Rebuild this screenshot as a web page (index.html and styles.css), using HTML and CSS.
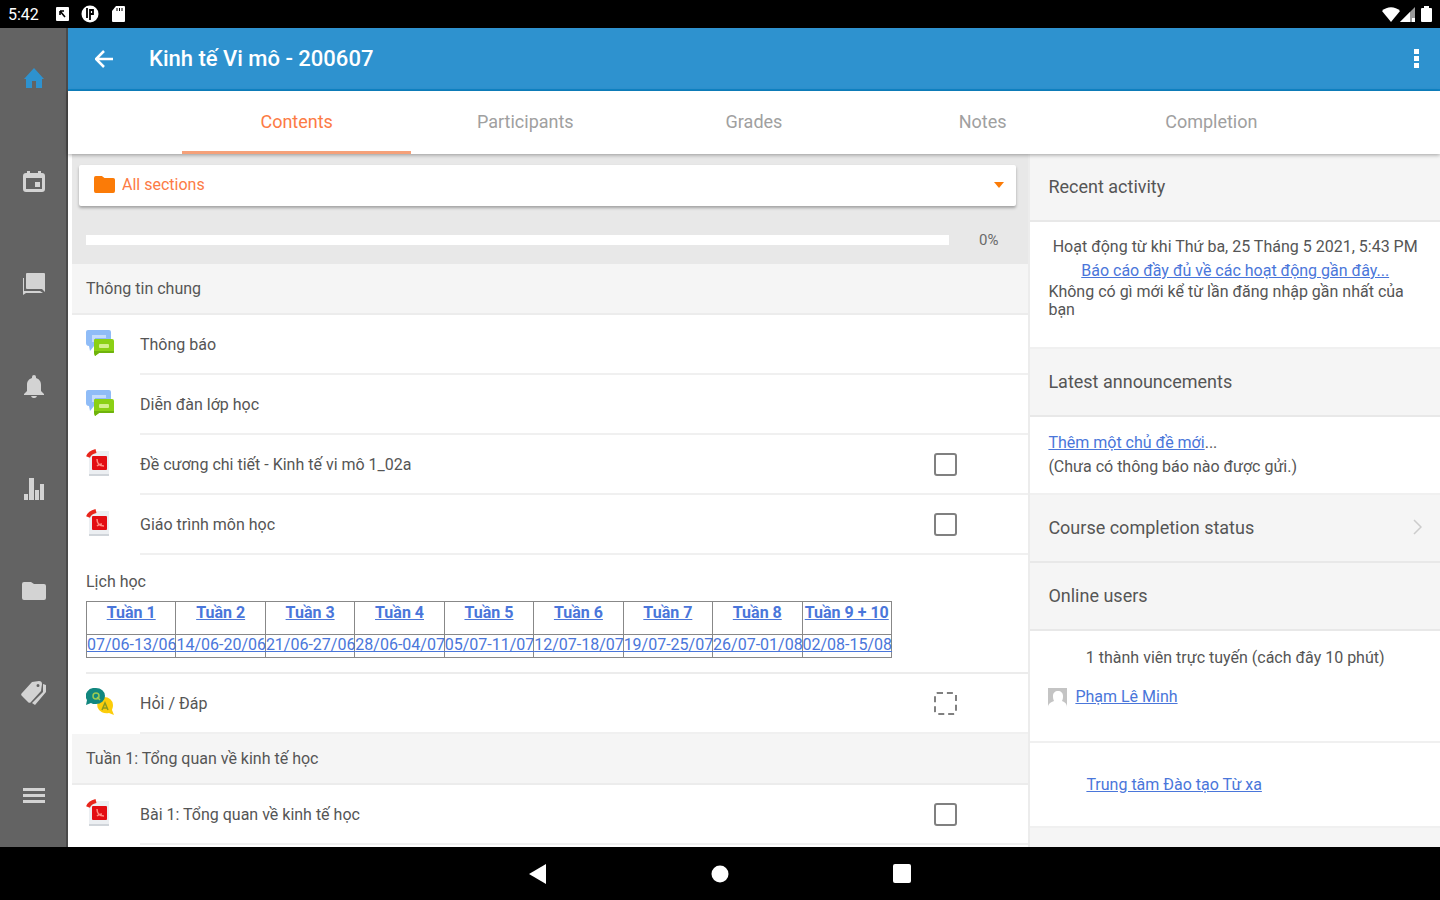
FILE: index.html
```html
<!DOCTYPE html>
<html lang="vi">
<head>
  <meta charset="UTF-8" />
  <meta name="viewport" content="width=device-width, initial-scale=1.0" />
  <title>Kinh tế Vi mô - 200607</title>
  <link rel="stylesheet" href="styles.css">
</head>
<body>
  <!-- shared icons -->
  <svg class="sprite" aria-hidden="true">
    <symbol id="forum" viewBox="0 0 28 28">
      <path fill="#8fbcf7" d="M2 1h21a2 2 0 0 1 2 2v14H8l-4 5-1-5a3 3 0 0 1-3-3V3a2 2 0 0 1 2-2z" />
      <path fill="#c5dcfc" d="M6 6h14v3H9v4H6z" />
      <path fill="#8bd015" d="M9 10h17a2 2 0 0 1 2 2v11a1 1 0 0 1-1 1H13l-4 3-1-3V11a1 1 0 0 1 1-1z" />
      <path fill="#6fb30c" d="M8 22h20v1a1 1 0 0 1-1 1H13l-4 3-1-3z" />
      <rect x="13" y="15" width="10" height="4" rx="1" fill="#d4f08f" />
    </symbol>
    <symbol id="pdf" viewBox="0 0 28 28">
      <path fill="#eceff2" d="M8 2h15v25H3V9z" />
      <path fill="#d0d5da" d="M3 25h20v2H3z" />
      <rect x="6" y="7" width="15" height="14" rx="1" fill="#e30d12" />
      <path fill="none" stroke="#e8261c" stroke-width="4" d="M2 8c1-3 4-5 8-6" />
      <path fill="none" stroke="#ff8a80" stroke-width="1.5" d="M11 10c0 4 2 7 7 7M11 17c2-2 3-2 5-2" />
    </symbol>
    <symbol id="folder" viewBox="0 0 24 18">
      <path fill="currentColor" d="M2 0h7l3 2h10a2 2 0 0 1 2 2v12a2 2 0 0 1-2 2H2a2 2 0 0 1-2-2V2a2 2 0 0 1 2-2z" />
    </symbol>
  </svg>

  <div class="status-bar">
    <div class="status-left">
      <span class="clock">5:42</span>
      <svg width="13" height="14" viewBox="0 0 13 14"><rect width="13" height="14" rx="1" fill="#fff" /><path d="M4 4l5 6M4 4v4M4 4h4" stroke="#000" stroke-width="1.6" fill="none" /></svg>
      <svg width="18" height="18" viewBox="0 0 18 18"><circle cx="9" cy="9" r="8.5" fill="#fff" /><path d="M6 3v10M9 4v11M9 5h3v4H9" stroke="#000" stroke-width="1.8" fill="none" /></svg>
      <svg width="14" height="16" viewBox="0 0 14 16"><path fill="#fff" d="M5 0h8a1 1 0 0 1 1 1v14a1 1 0 0 1-1 1H2a1 1 0 0 1-1-1V5z" /><path stroke="#000" d="M6 2v3M8.5 2v3M11 2v3" /></svg>
    </div>
    <div class="status-right">
      <svg width="18" height="15" viewBox="0 0 18 15"><path fill="#fff" d="M9 15L0 4c5-5 13-5 18 0z" /></svg>
      <svg width="15" height="15" viewBox="0 0 15 15"><path fill="#999" d="M15 0v15H0z" /><path fill="#fff" d="M10 5v10H0zM12 11h3v4h-3z" /></svg>
      <svg class="battery" width="11" height="16" viewBox="0 0 11 16"><path fill="#fff" d="M3 0h5v2h2a1 1 0 0 1 1 1v12a1 1 0 0 1-1 1H1a1 1 0 0 1-1-1V3a1 1 0 0 1 1-1h2z" /></svg>
    </div>
  </div>

  <div class="app">
    <nav class="side-nav">
      <a href="#" class="active" aria-label="Home"><svg width="24" height="24" viewBox="0 0 24 24"><path d="M10 21v-7h4v7h6v-9h2L12 1 2 12h2v9z" /></svg></a>
      <a href="#" aria-label="Calendar"><svg width="24" height="24" viewBox="0 0 24 24"><path fill-rule="evenodd" d="M5 1h3v2h8V1h3v2h1a3 3 0 0 1 3 3v13a3 3 0 0 1-3 3H4a3 3 0 0 1-3-3V6a3 3 0 0 1 3-3h1zM4 8v11h16V8z" /><path d="M13 12h5v5h-5z" /></svg></a>
      <a href="#" aria-label="Messages"><svg width="24" height="24" viewBox="0 0 24 24"><path d="M5 1h17a1 1 0 0 1 1 1v18l-3-3H5a1 1 0 0 1-1-1V2a1 1 0 0 1 1-1z" /><path d="M1 6h1v13h16l3 2H4l-3 2z" /></svg></a>
      <a href="#" aria-label="Notifications"><svg width="24" height="24" viewBox="0 0 24 24"><path d="M12 24a3 3 0 0 0 3-2H9a3 3 0 0 0 3 2zM19 17v-6c0-4-2-6-5-7V3a2 2 0 0 0-4 0v1c-3 1-5 3-5 7v6l-3 3v1h20v-1z" /></svg></a>
      <a href="#" aria-label="Grades"><svg width="24" height="24" viewBox="0 0 24 24"><path d="M2 17h4v6H2zM7 1h5v22H7zM13 13h4v10h-4zM18 7h4v16h-4z" /></svg></a>
      <a href="#" aria-label="Files"><svg width="24" height="18"><use href="#folder" /></svg></a>
      <a href="#" aria-label="Tags"><svg width="26" height="26" viewBox="0 0 26 26"><path fill-rule="evenodd" d="M1 13L11 2l7-1a3 3 0 0 1 3 3l-1 7-10 11a2 2 0 0 1-3 0l-6-6a2 2 0 0 1 0-3zM17 4a1 1 0 0 0 0 3 1 1 0 0 0 0-3z" /><path d="M22 4l3 1v7L14 25l-3-2 11-11z" /></svg></a>
      <a href="#" aria-label="Menu"><svg width="22" height="16" viewBox="0 0 22 16"><path d="M0 0h22v3H0zM0 6h22v3H0zM0 12h22v3H0z" /></svg></a>
    </nav>

    <div class="page">
      <header class="toolbar">
        <button class="icon-btn" aria-label="Back"><svg width="18" height="18" viewBox="0 0 18 18"><path fill="none" stroke="#fff" stroke-width="2.5" d="M18 9H2M9 1L1 9l8 8" /></svg></button>
        <h1>Kinh tế Vi mô - 200607</h1>
        <button class="icon-btn more" aria-label="More"><svg width="6" height="20" viewBox="0 0 6 20"><path fill="#fff" d="M0 0h5v5H0zM0 7h5v5H0zM0 14h5v5H0z" /></svg></button>
      </header>

      <div class="tabs">
        <a href="#" class="tab selected">Contents</a>
        <a href="#" class="tab">Participants</a>
        <a href="#" class="tab">Grades</a>
        <a href="#" class="tab">Notes</a>
        <a href="#" class="tab">Completion</a>
      </div>

      <div class="columns">
        <main class="contents">
          <div class="course-top">
            <label class="section-select">
              <svg width="21" height="17" viewBox="0 0 24 18" preserveAspectRatio="none"><use href="#folder" /></svg>
              <select aria-label="Section">
                <option>All sections</option>
              </select>
              <svg width="10" height="6" viewBox="0 0 10 6"><path fill="currentColor" d="M0 0h10L5 6z" /></svg>
            </label>
            <div class="progress-row">
              <progress id="courseProgress" value="0" max="100" aria-label="Progress"></progress>
              <label for="courseProgress">0%</label>
            </div>
          </div>

          <h2 class="section-title">Thông tin chung</h2>
          <div class="item">
            <svg width="28" height="28"><use href="#forum" /></svg>
            <div class="item-body"><a href="#">Thông báo</a></div>
          </div>
          <div class="item">
            <svg width="28" height="28"><use href="#forum" /></svg>
            <div class="item-body"><a href="#">Diễn đàn lớp học</a></div>
          </div>
          <div class="item">
            <svg width="28" height="28"><use href="#pdf" /></svg>
            <div class="item-body">
              <label for="done1">Đề cương chi tiết - Kinh tế vi mô 1_02a</label>
              <input type="checkbox" id="done1" />
            </div>
          </div>
          <div class="item">
            <svg width="28" height="28"><use href="#pdf" /></svg>
            <div class="item-body">
              <label for="done2">Giáo trình môn học</label>
              <input type="checkbox" id="done2" />
            </div>
          </div>

          <div class="schedule">
            <p>Lịch học</p>
            <table>
              <tr>
                <th><a href="#">Tuần 1</a></th>
                <th><a href="#">Tuần 2</a></th>
                <th><a href="#">Tuần 3</a></th>
                <th><a href="#">Tuần 4</a></th>
                <th><a href="#">Tuần 5</a></th>
                <th><a href="#">Tuần 6</a></th>
                <th><a href="#">Tuần 7</a></th>
                <th><a href="#">Tuần 8</a></th>
                <th><a href="#">Tuần 9 + 10</a></th>
              </tr>
              <tr>
                <td><a href="#">07/06-13/06</a></td>
                <td><a href="#">14/06-20/06</a></td>
                <td><a href="#">21/06-27/06</a></td>
                <td><a href="#">28/06-04/07</a></td>
                <td><a href="#">05/07-11/07</a></td>
                <td><a href="#">12/07-18/07</a></td>
                <td><a href="#">19/07-25/07</a></td>
                <td><a href="#">26/07-01/08</a></td>
                <td><a href="#">02/08-15/08</a></td>
              </tr>
            </table>
          </div>

          <div class="item">
            <svg width="28" height="28" viewBox="0 0 28 28">
              <path fill="#fccd0a" d="M18 9a9 8 0 0 1 9 8c0 3-1 4-1 5l2 5-5-2a9 8 0 1 1-5-16z" />
              <path fill="#12877f" d="M10 0a9 8 0 0 1 0 16c-2 0-4 0-5-1l-5 2 1-5A9 8 0 0 1 10 0z" />
              <circle cx="10" cy="8" r="3" fill="none" stroke="#9ccb52" stroke-width="1.5" />
              <path fill="none" stroke="#9ccb52" stroke-width="1.5" d="M11 9l3 3" />
              <path fill="none" stroke="#8a9a20" stroke-width="1.5" d="M16 22l3-7 3 7M17 20h4" />
            </svg>
            <div class="item-body">
              <label for="done3">Hỏi / Đáp</label>
              <input type="checkbox" class="auto" id="done3" />
            </div>
          </div>

          <h2 class="section-title">Tuần 1: Tổng quan về kinh tế học</h2>
          <div class="item">
            <svg width="28" height="28"><use href="#pdf" /></svg>
            <div class="item-body">
              <label for="done4">Bài 1: Tổng quan về kinh tế học</label>
              <input type="checkbox" id="done4" />
            </div>
          </div>
        </main>

        <aside class="blocks">
          <h2>Recent activity</h2>
          <div class="block recent">
            <p class="center">Hoạt động từ khi Thứ ba, 25 Tháng 5 2021, 5:43 PM</p>
            <p class="center"><a href="#">Báo cáo đầy đủ về các hoạt động gần đây...</a></p>
            <p class="note">Không có gì mới kể từ lần đăng nhập gần nhất của bạn</p>
          </div>

          <h2>Latest announcements</h2>
          <div class="block news">
            <p><a href="#">Thêm một chủ đề mới</a>...</p>
            <p>(Chưa có thông báo nào được gửi.)</p>
          </div>

          <h2>Course completion status
            <svg width="9" height="16" viewBox="0 0 9 16"><path fill="none" stroke="#ccc" stroke-width="1.5" d="M1 1l7 7-7 7" /></svg>
          </h2>
          <h2>Online users</h2>
          <div class="block online">
            <p class="center">1 thành viên trực tuyến (cách đây 10 phút)</p>
            <p class="user">
              <svg width="19" height="19" viewBox="0 0 19 19"><path fill="#c4c4c4" d="M0 0h19v19c0-3-2-5-5-6 1-2 1-4 1-5 0-3-2-5-5-5S5 5 5 8c0 1 0 3 1 5-3 1-6 3-6 6z" /></svg>
              <a href="#">Phạm Lê Minh</a>
            </p>
          </div>
          <div class="block centre-link">
            <a href="#">Trung tâm Đào tạo Từ xa</a>
          </div>
        </aside>
      </div>
    </div>
  </div>

  <div class="android-nav">
    <button aria-label="Back"><svg width="18" height="20" viewBox="0 0 18 20"><path fill="#fff" d="M17 0v20L0 10z" /></svg></button>
    <button aria-label="Home"><svg width="18" height="18" viewBox="0 0 18 18"><circle cx="9" cy="9" r="8.5" fill="#fff" /></svg></button>
    <button aria-label="Recent apps"><svg width="18" height="20" viewBox="0 0 18 20"><rect width="18" height="19" rx="2" fill="#fff" /></svg></button>
  </div>
</body>
</html>
```
FILE: styles.css
```css
* {
  box-sizing: border-box;
}
body {
  margin: 0;
  height: 100vh;
  display: flex;
  flex-direction: column;
  overflow: hidden;
  font-family: Roboto, "Noto Sans", sans-serif;
  font-size: 16px;
  color: #555;
  background: #000;
}
h1, h2, p {
  margin: 0;
}
svg {
  display: block;
  flex: none;
}
button {
  padding: 0;
  border: 0;
  background: none;
}
.sprite {
  position: absolute;
  width: 0;
  height: 0;
}

/* system bars */
.status-bar {
  display: flex;
  justify-content: space-between;
  align-items: center;
  height: 28px;
  padding: 0 8px;
}
.status-left {
  display: flex;
  align-items: center;
  gap: 12px;
}
.status-right {
  display: flex;
  align-items: center;
}
.battery {
  margin-left: 6px;
}
.clock {
  width: 36px;
  font-size: 16px;
  color: #fff;
}
.android-nav {
  display: flex;
  justify-content: center;
  align-items: center;
  gap: 136px;
  height: 53px;
}
.android-nav button {
  display: flex;
  justify-content: center;
  width: 46px;
}

.app {
  flex: 1;
  min-height: 0;
  display: flex;
}
.side-nav {
  display: flex;
  flex-direction: column;
  width: 68px;
  background: #636363;
  box-shadow: inset -2px 0 #4a4a4a;
}
.side-nav a {
  flex: 1;
  display: flex;
  align-items: center;
  justify-content: center;
  color: #d3d3d3;
}
.side-nav svg {
  fill: currentColor;
}
.side-nav .active {
  color: #2e92cf;
}
.page {
  flex: 1;
  min-width: 0;
  display: flex;
  flex-direction: column;
  background: #fff;
}

/* header */
.toolbar {
  display: flex;
  align-items: center;
  height: 63px;
  padding: 0 20px 0 27px;
  background: #2e92cf;
  border-bottom: 2px solid #0f86c8;
}
.toolbar h1 {
  flex: 1;
  margin-left: 36px;
  font-size: 22px;
  font-weight: 500;
  color: #fff;
}
.tabs {
  position: relative;
  display: grid;
  grid-template-columns: 1fr repeat(5, 2fr) 1fr;
  height: 63px;
  box-shadow: 0 1px 4px rgba(0, 0, 0, 0.35);
}
.tab {
  display: flex;
  align-items: center;
  justify-content: center;
  border-bottom: 3px solid transparent;
  font-size: 18px;
  color: #a0a0a0;
  text-decoration: none;
}
.tab:first-child {
  grid-column: 2;
}
.tab.selected {
  color: #fc7b45;
  border-color: #f5a17a;
}

.columns {
  flex: 1;
  min-height: 0;
  display: grid;
  grid-template-columns: 7fr 3fr;
}
.contents {
  min-width: 0;
  overflow: hidden;
  padding-left: 4px;
}
.course-top {
  height: 110px;
  padding: 11px 12px 0 7px;
  background: #e8e8e8;
}
.section-select {
  display: flex;
  align-items: center;
  gap: 7px;
  height: 41px;
  padding: 0 12px 2px 15px;
  background: #fff;
  border-radius: 2px;
  box-shadow: 0 2px 3px rgba(0, 0, 0, 0.3);
  color: #fb7b07;
}
.section-select select {
  flex: 1;
  appearance: none;
  padding: 0;
  border: 0;
  background: none;
  font: inherit;
  color: #fc7b45;
}
.progress-row {
  display: flex;
  align-items: center;
  justify-content: space-between;
  height: 68px;
  padding: 0 18px 0 7px;
  font-size: 15px;
  color: #6a6a6a;
}
progress {
  appearance: none;
  flex: 1;
  height: 10px;
  margin-right: 30px;
  border: 0;
}
progress::-webkit-progress-bar {
  background: #fff;
}
.section-title {
  display: flex;
  align-items: center;
  height: 51px;
  padding-left: 14px;
  background: #f5f5f5;
  border-bottom: 2px solid #ececec;
  font-size: 16px;
  font-weight: 400;
}
.item {
  display: flex;
  align-items: center;
  gap: 26px;
  height: 60px;
  padding-left: 14px;
}
.item > svg {
  margin-bottom: 4px;
}
.item-body {
  flex: 1;
  align-self: stretch;
  display: flex;
  align-items: center;
  justify-content: space-between;
  padding-right: 71px;
  border-bottom: 2px solid #f0f0f0;
}
.item-body a {
  color: inherit;
  text-decoration: none;
}
input[type="checkbox"] {
  appearance: none;
  width: 23px;
  height: 23px;
  margin: 0;
  border: 2px solid #808080;
  border-radius: 3px;
}
input.auto {
  border-style: dashed;
}
.schedule {
  height: 119px;
  margin-left: 14px;
  padding-top: 17px;
  border-bottom: 2px solid #ececec;
  line-height: 20px;
}
.schedule table {
  width: 806px;
  margin-top: 9px;
  table-layout: fixed;
  border-collapse: collapse;
}
.schedule th, .schedule td {
  padding: 0;
  border: 1px solid #888;
  vertical-align: top;
  text-align: center;
  white-space: nowrap;
}
.schedule th {
  height: 33px;
  padding-top: 1px;
}
.schedule td {
  height: 23px;
}
.schedule a, .block a {
  color: #4a76da;
}

/* side blocks */
.blocks {
  min-width: 0;
  overflow: hidden;
  background: #f5f5f5;
  border-left: 2px solid #ececec;
}
.blocks h2 {
  display: flex;
  align-items: center;
  justify-content: space-between;
  height: 68px;
  padding: 0 18px 2px;
  border-bottom: 2px solid #e8e8e8;
  font-size: 18px;
  font-weight: 400;
}
.block {
  padding: 0 18px;
  background: #fff;
  border-bottom: 2px solid #f0f0f0;
}
.block p {
  line-height: 24px;
}
.block .center {
  text-align: center;
}
.recent {
  height: 127px;
  padding-top: 13px;
}
.block .note {
  line-height: 18px;
}
.news {
  height: 78px;
  padding-top: 14px;
}
.online {
  height: 112px;
  padding-top: 15px;
}
.block .user {
  display: flex;
  align-items: center;
  gap: 8px;
  margin-top: 15px;
}
.centre-link {
  height: 85px;
  padding: 32px 56px 0;
}
```
